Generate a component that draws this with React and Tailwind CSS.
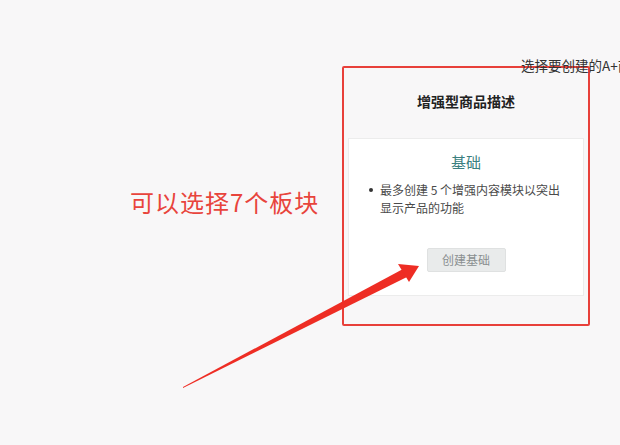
export default function App() {
  return (
    <div className="relative w-[620px] h-[445px] overflow-hidden bg-[#f8f7f8] font-['Noto_Sans_CJK_SC','Noto_Sans',sans-serif]">
      <div className="absolute left-[521px] top-[55px] whitespace-nowrap text-[13.5px] leading-[20px] text-[#333]">
        选择要创建的A+商品描述类型
      </div>

      <div className="pt-[66px] pl-[342px]">
        <div className="w-[248px] h-[260px] border-2 border-[#e8403a] rounded-[2px] px-[4px] pt-[23px]">
          <h3 className="text-center text-[14px] leading-[20px] font-bold text-[#222]">增强型商品描述</h3>
          <div className="mt-[27px] h-[158px] bg-white border border-[#ececec] flex flex-col items-center">
            <div className="pt-[13px] text-[15px] leading-[20px] text-[#3b7f80]">基础</div>
            <div className="mt-[9px] w-full pl-[20px] pr-[14px] flex gap-[7px] text-[12px] leading-[18px] text-[#4a4a4a]">
              <span className="mt-[7px] w-[4px] h-[4px] rounded-full bg-[#333] shrink-0" />
              <p>最多创建 5 个增强内容模块以突出显示产品的功能</p>
            </div>
            <button className="mt-[31px] w-[79px] h-[24px] rounded-[2px] bg-[#e9ebeb] border border-[#dfe1e1] text-[12px] text-[#8a8f90]">
              创建基础
            </button>
          </div>
        </div>
      </div>

      <div className="absolute left-[130px] top-[187px] text-[24px] leading-[30px] tracking-[1px] text-[#e8443c]">
        可以选择7个板块
      </div>

      <svg className="absolute left-0 top-0" width="620" height="445" viewBox="0 0 620 445">
        <polygon points="183,387 403,269 407,277 183,388" fill="#ee2d24" />
        <polygon points="419,266 398,264 409,282" fill="#ee2d24" />
      </svg>
    </div>
  );
}
